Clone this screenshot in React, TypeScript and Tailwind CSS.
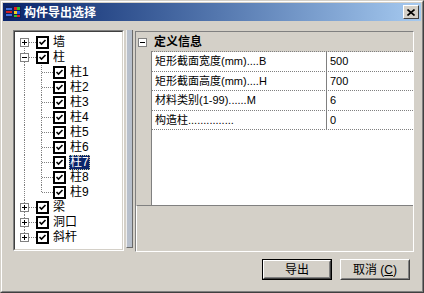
import React from "react";

const dot = { stroke: "#808080", strokeDasharray: "1 1", shapeRendering: "crispEdges" as const };

interface Node {
  label: string;
  open?: boolean;
  children?: string[];
}

const roots: Node[] = [
  { label: "墙" },
  { label: "柱", open: true, children: ["柱1", "柱2", "柱3", "柱4", "柱5", "柱6", "柱7", "柱8", "柱9"] },
  { label: "梁" },
  { label: "洞口" },
  { label: "斜杆" },
];

const props = [
  { name: "矩形截面宽度(mm)....B", value: "500", h: "h-[20px]" },
  { name: "矩形截面高度(mm)....H", value: "700", h: "h-[19px]" },
  { name: "材料类别(1-99)......M", value: "6", h: "h-[20px]" },
  { name: "构造柱...............", value: "0", h: "h-[19px]" },
];

function Check() {
  return (
    <svg width="13" height="13" className="shrink-0">
      <rect x="1" y="1" width="11" height="11" fill="white" stroke="#000" strokeWidth="2" />
      <path d="M3.5 6 L5.5 8 L9.5 4" fill="none" stroke="#000" strokeWidth="1.6" />
    </svg>
  );
}

function Box({ open, x, y }: { open: boolean; x: number; y: number }) {
  return (
    <g shapeRendering="crispEdges">
      <rect x={x + 0.5} y={y + 0.5} width="8" height="8" fill="white" stroke="#808080" />
      <line x1={x + 2} x2={x + 7} y1={y + 4.5} y2={y + 4.5} stroke="#000" />
      {!open && <line x1={x + 4.5} x2={x + 4.5} y1={y + 2} y2={y + 7} stroke="#000" />}
    </g>
  );
}

function RootLead({ first, last, open }: { first: boolean; last: boolean; open: boolean }) {
  return (
    <svg width="21" height="15" className="shrink-0">
      <line x1="9.5" x2="9.5" y1={first ? 7 : 0} y2={last ? 8 : 15} {...dot} />
      <line x1="14" x2="21" y1="7.5" y2="7.5" {...dot} />
      <Box open={open} x={5} y={3} />
    </svg>
  );
}

function ChildLead({ last }: { last: boolean }) {
  return (
    <svg width="38" height="15" className="shrink-0">
      <line x1="9.5" x2="9.5" y1="0" y2="15" {...dot} />
      <line x1="26.5" x2="26.5" y1="0" y2={last ? 8 : 15} {...dot} />
      <line x1="27" x2="38" y1="7.5" y2="7.5" {...dot} />
    </svg>
  );
}

function Label({ text, selected }: { text: string; selected?: boolean }) {
  return (
    <span
      className={
        "ml-[3px] px-px h-[15px] flex items-center text-[12px] leading-[13px] " +
        (selected ? "bg-[#0a246a] text-white outline-1 outline-dotted outline-[#c8c8a0] -outline-offset-1" : "text-black")
      }
    >
      {text}
    </span>
  );
}

function Tree() {
  return (
    <div className="w-[111px] h-[221px] border border-t-[#808080] border-l-[#808080] border-r-white border-b-white">
      <div className="h-full bg-white border border-t-[#404040] border-l-[#404040] border-r-[#d4d0c8] border-b-[#d4d0c8] pt-[3px]">
        {roots.map((r, i) => (
          <React.Fragment key={r.label}>
            <div className="flex items-center h-[15px]">
              <RootLead first={i === 0} last={i === roots.length - 1} open={!!r.open} />
              <Check />
              <Label text={r.label} />
            </div>
            {r.open &&
              r.children!.map((c, j) => (
                <div key={c} className="flex items-center h-[15px]">
                  <ChildLead last={j === r.children!.length - 1} />
                  <Check />
                  <Label text={c} selected={c === "柱7"} />
                </div>
              ))}
          </React.Fragment>
        ))}
      </div>
    </div>
  );
}

function PropGrid() {
  return (
    <div className="mt-px ml-[2px] w-[279px] h-[221px] border border-t-[#808080] border-l-[#808080] border-r-white border-b-white flex flex-col">
      <div className="h-[173px] flex flex-col">
        <div className="h-[20px] flex bg-[#d4d0c8]">
          <div className="w-[15px] flex items-center pl-[2px]">
            <svg width="9" height="9">
              <Box open={true} x={0} y={0} />
            </svg>
          </div>
          <div className="flex-1 flex items-center pl-[3px] border-b border-dotted border-[#808080] text-[12px] font-bold">
            定义信息
          </div>
        </div>
        <div className="flex-1 flex">
          <div className="w-[15px] bg-[#d4d0c8] border-r border-[#808080] box-content" />
          <div className="flex-1 bg-white">
            {props.map((p) => (
              <div key={p.name} className={"flex border-b border-dotted border-[#808080] text-[11px] " + p.h}>
                <div className="w-[171px] pl-[3px] flex items-center border-r border-solid border-[#808080] box-content">
                  {p.name}
                </div>
                <div className="flex-1 pl-[3px] flex items-center">{p.value}</div>
              </div>
            ))}
          </div>
        </div>
      </div>
      <div className="flex-1 bg-[#d4d0c8] border-t border-[#808080] border-l border-l-white" />
    </div>
  );
}

function Button({ children, isDefault }: { children: React.ReactNode; isDefault?: boolean }) {
  return (
    <div className={"w-[70px] h-[21px] " + (isDefault ? "border border-black" : "")}>
      <div className="h-full border border-t-white border-l-white border-r-[#404040] border-b-[#404040]">
        <div className="h-full border border-t-[#d4d0c8] border-l-[#d4d0c8] border-r-[#808080] border-b-[#808080] flex items-center justify-center text-[12px]">
          {children}
        </div>
      </div>
    </div>
  );
}

export default function App() {
  return (
    <div className="w-[424px] h-[293px] bg-[#d4d0c8] border border-t-[#d4d0c8] border-l-[#d4d0c8] border-r-[#404040] border-b-[#404040] font-['Liberation_Sans','Noto_Sans_CJK_SC',sans-serif] text-black">
      <div className="h-full border border-t-white border-l-white border-r-[#808080] border-b-[#808080] p-px flex flex-col">
        <div className="h-[18px] flex items-center bg-linear-to-r from-[#0a246a] to-[#a6caf0] pl-[2px] pr-[2px]">
          <svg width="16" height="14" className="shrink-0">
            <rect x="0" y="1" width="16" height="12" fill="#10205a" />
            <rect x="1" y="3" width="6" height="2" fill="#4070e0" />
            <rect x="1" y="6" width="6" height="2" fill="#d02020" />
            <rect x="1" y="9" width="6" height="2" fill="#4070e0" />
            <rect x="9" y="2" width="3" height="3" fill="#e02020" />
            <rect x="12" y="2" width="3" height="3" fill="#30c030" />
            <rect x="9" y="6" width="3" height="3" fill="#f0d020" />
            <rect x="12" y="6" width="3" height="3" fill="#2050e0" />
            <rect x="9" y="10" width="3" height="2" fill="#30c030" />
            <rect x="12" y="10" width="3" height="2" fill="#e02020" />
          </svg>
          <span className="ml-[3px] text-white font-bold text-[12px] leading-none font-['Noto_Sans_CJK_SC',sans-serif]">
            构件导出选择
          </span>
          <div className="ml-auto w-[16px] h-[14px] border border-t-white border-l-white border-r-[#404040] border-b-[#404040] bg-[#d4d0c8] flex items-center justify-center">
            <svg width="8" height="7">
              <path d="M0.5 0.5 L7.5 6.5 M7.5 0.5 L0.5 6.5" stroke="#000" strokeWidth="1.6" />
            </svg>
          </div>
        </div>
        <div className="flex items-start pl-[10px] pt-[9px]">
          <Tree />
          <div className="ml-[2px] w-[7px] h-[218px] bg-[#b8c0cc] border-l border-l-[#eeeeee] border-r border-r-[#6a6a6a] border-b border-b-[#6a6a6a]" />
          <PropGrid />
        </div>
        <div className="flex justify-end gap-[8px] pr-[11px] mt-[7px]">
          <Button isDefault>导出</Button>
          <Button>
            取消&nbsp;(<span className="underline">C</span>)
          </Button>
        </div>
      </div>
    </div>
  );
}
